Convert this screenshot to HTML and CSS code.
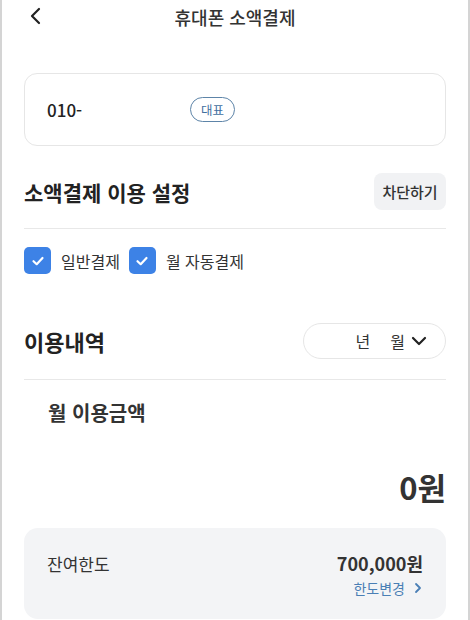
FILE: index.html
```html
<!DOCTYPE html>
<html lang="ko">

<head>
    <meta charset="UTF-8">
    <meta name="viewport" content="width=device-width, initial-scale=1.0">
    <title>휴대폰 소액결제</title>
    <link rel="stylesheet" href="styles.css">
</head>

<body>
    <div class="screen">
        <header class="top-bar">
            <a href="#" class="back-button">
                <svg width="14" height="18" viewBox="0 0 14 18">
                    <path d="M10 2 L3 9 L10 16" fill="none" stroke="#222" stroke-width="2.2" stroke-linecap="round" stroke-linejoin="round" />
                </svg>
            </a>
            <h1 class="page-title">휴대폰 소액결제</h1>
        </header>

        <div class="content">
            <div class="phone-card">
                <span class="phone-number">010-</span>
                <span class="badge">대표</span>
            </div>

            <div class="section-row">
                <h2 class="section-title">소액결제 이용 설정</h2>
                <button class="block-button">차단하기</button>
            </div>
            <div class="divider"></div>

            <div class="check-row">
                <label class="check-item">
                    <span class="check-box">
                        <svg width="16" height="16" viewBox="0 0 16 16">
                            <path d="M3.5 8.2 L6.7 11.2 L12.5 5" fill="none" stroke="#fff" stroke-width="2.2" stroke-linecap="round" stroke-linejoin="round" />
                        </svg>
                    </span>
                    일반결제
                </label>
                <label class="check-item">
                    <span class="check-box">
                        <svg width="16" height="16" viewBox="0 0 16 16">
                            <path d="M3.5 8.2 L6.7 11.2 L12.5 5" fill="none" stroke="#fff" stroke-width="2.2" stroke-linecap="round" stroke-linejoin="round" />
                        </svg>
                    </span>
                    월 자동결제
                </label>
            </div>

            <div class="section-row history-row">
                <h2 class="section-title big">이용내역</h2>
                <div class="month-select">
                    <span class="year">년</span>
                    <span class="month">월</span>
                    <svg width="16" height="12" viewBox="0 0 16 12">
                        <path d="M2 3 L8 9 L14 3" fill="none" stroke="#222" stroke-width="2.2" stroke-linecap="round" stroke-linejoin="round" />
                    </svg>
                </div>
            </div>
            <div class="divider"></div>

            <div class="usage-title">월 이용금액</div>
            <div class="usage-amount">0원</div>

            <div class="limit-card">
                <div class="limit-row">
                    <span class="limit-label">잔여한도</span>
                    <span class="limit-value">700,000원</span>
                </div>
                <a href="#" class="limit-change">한도변경
                    <svg width="10" height="12" viewBox="0 0 10 12">
                        <path d="M3 2 L7 6 L3 10" fill="none" stroke="#4a7fb5" stroke-width="1.8" stroke-linecap="round" stroke-linejoin="round" />
                    </svg>
                </a>
            </div>
        </div>
    </div>
</body>

</html>
```

FILE: styles.css
```css
body {
    margin: 0;
    padding: 0;
    background: #fff;
    font-family: "Noto Sans CJK KR", "Noto Sans", sans-serif;
    color: #222;
}

.screen {
    width: 470px;
    height: 620px;
    box-sizing: border-box;
    border-left: 2px solid #d4d4d4;
    border-right: 2px solid #d4d4d4;
    overflow: hidden;
}

.top-bar {
    position: relative;
    height: 34px;
    display: flex;
    align-items: center;
    justify-content: center;
}

.back-button {
    position: absolute;
    left: 27px;
    top: 7px;
    display: flex;
}

.page-title {
    margin: 0;
    font-size: 18px;
    font-weight: 500;
    color: #333;
}

.content {
    padding: 39px 22px 0 22px;
}

.phone-card {
    height: 73px;
    box-sizing: border-box;
    border: 1px solid #e6e6e6;
    border-radius: 13px;
    display: flex;
    align-items: center;
    padding-left: 22px;
}

.phone-number {
    font-size: 17px;
    font-weight: 500;
    width: 143px;
}

.badge {
    font-size: 12.5px;
    color: #3f6f9f;
    border: 1px solid #5d84a8;
    border-radius: 13px;
    padding: 3px 10px 3px;
    line-height: 17px;
}

.section-row {
    display: flex;
    justify-content: space-between;
    align-items: center;
    margin-top: 27px;
}

.section-title {
    margin: 0;
    font-size: 21px;
    font-weight: 700;
}

.section-title.big {
    font-size: 22px;
}

.block-button {
    font-family: inherit;
    font-size: 15px;
    font-weight: 500;
    color: #333;
    background: #f1f2f4;
    border: none;
    border-radius: 8px;
    width: 72px;
    height: 37px;
    padding: 0;
}

.divider {
    height: 1px;
    background: #e8e8e8;
    margin-top: 18px;
}

.check-row {
    display: flex;
    gap: 9px;
    margin-top: 18px;
}

.check-item {
    display: flex;
    align-items: center;
    gap: 10px;
    font-size: 16px;
    color: #333;
}

.check-box {
    width: 27px;
    height: 27px;
    border-radius: 5px;
    background: #3d82e6;
    display: flex;
    align-items: center;
    justify-content: center;
}

.history-row {
    margin-top: 49px;
}

.month-select {
    width: 143px;
    height: 36px;
    box-sizing: border-box;
    border: 1px solid #e6e6e6;
    border-radius: 18px;
    display: flex;
    align-items: center;
    justify-content: flex-end;
    padding-right: 18px;
    font-size: 16px;
    color: #333;
}

.month-select .year {
    margin-right: 20px;
}

.month-select .month {
    margin-right: 6px;
}

.history-row + .divider {
    margin-top: 20px;
}

.usage-title {
    margin-top: 18px;
    padding-left: 24px;
    font-size: 20px;
    font-weight: 700;
    color: #333;
}

.usage-amount {
    margin-top: 37px;
    text-align: right;
    font-size: 31px;
    font-weight: 700;
    color: #333;
}

.limit-card {
    margin-top: 19px;
    background: #f3f4f6;
    border-radius: 14px;
    padding: 22px 23px 20px 23px;
    height: 91px;
    box-sizing: border-box;
}

.limit-row {
    display: flex;
    justify-content: space-between;
    align-items: center;
}

.limit-label {
    font-size: 17px;
    color: #333;
}

.limit-value {
    font-size: 18px;
    font-weight: 700;
    color: #333;
}

.limit-change {
    display: flex;
    justify-content: flex-end;
    align-items: center;
    gap: 8px;
    margin-top: 2px;
    text-decoration: none;
    color: #4a7fb5;
    font-size: 14px;
}
```
